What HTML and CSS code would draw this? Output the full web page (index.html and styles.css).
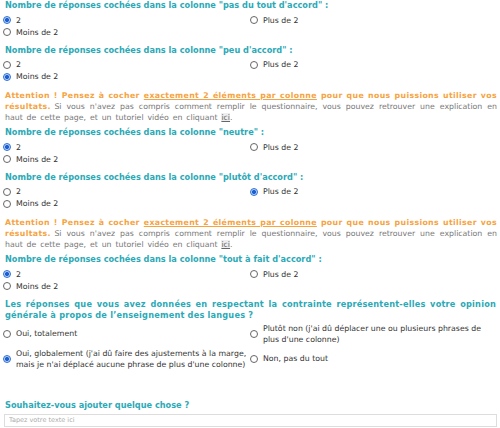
FILE: index.html
```html
<!DOCTYPE html>
<html lang="fr">
<head>
<meta charset="utf-8">
<link rel="stylesheet" href="styles.css">
</head>
<body>
<div class="page">
  <section class="q">
    <h2 class="qt">Nombre de réponses cochées dans la colonne "pas du tout d'accord" :</h2>
    <div class="opts">
      <label class="opt"><input type="radio" name="a" checked><span>2</span></label>
      <label class="opt"><input type="radio" name="a"><span>Plus de 2</span></label>
      <label class="opt"><input type="radio" name="a"><span>Moins de 2</span></label>
    </div>
  </section>
  <section class="q">
    <h2 class="qt">Nombre de réponses cochées dans la colonne "peu d'accord" :</h2>
    <div class="opts">
      <label class="opt"><input type="radio" name="b"><span>2</span></label>
      <label class="opt"><input type="radio" name="b"><span>Plus de 2</span></label>
      <label class="opt"><input type="radio" name="b" checked><span>Moins de 2</span></label>
    </div>
  </section>
  <p class="warn"><strong>Attention ! Pensez à cocher <u>exactement 2 éléments par colonne</u> pour que nous puissions utiliser vos résultats.</strong> <span class="help">Si vous n'avez pas compris comment remplir le questionnaire, vous pouvez retrouver une explication en haut de cette page, et un tutoriel vidéo en cliquant <a class="link">ici</a>.</span></p>
  <section class="q">
    <h2 class="qt">Nombre de réponses cochées dans la colonne "neutre" :</h2>
    <div class="opts">
      <label class="opt"><input type="radio" name="c" checked><span>2</span></label>
      <label class="opt"><input type="radio" name="c"><span>Plus de 2</span></label>
      <label class="opt"><input type="radio" name="c"><span>Moins de 2</span></label>
    </div>
  </section>
  <section class="q">
    <h2 class="qt">Nombre de réponses cochées dans la colonne "plutôt d'accord" :</h2>
    <div class="opts">
      <label class="opt"><input type="radio" name="d"><span>2</span></label>
      <label class="opt"><input type="radio" name="d" checked><span>Plus de 2</span></label>
      <label class="opt"><input type="radio" name="d"><span>Moins de 2</span></label>
    </div>
  </section>
  <p class="warn"><strong>Attention ! Pensez à cocher <u>exactement 2 éléments par colonne</u> pour que nous puissions utiliser vos résultats.</strong> <span class="help">Si vous n'avez pas compris comment remplir le questionnaire, vous pouvez retrouver une explication en haut de cette page, et un tutoriel vidéo en cliquant <a class="link">ici</a>.</span></p>
  <section class="q">
    <h2 class="qt">Nombre de réponses cochées dans la colonne "tout à fait d'accord" :</h2>
    <div class="opts">
      <label class="opt"><input type="radio" name="e" checked><span>2</span></label>
      <label class="opt"><input type="radio" name="e"><span>Plus de 2</span></label>
      <label class="opt"><input type="radio" name="e"><span>Moins de 2</span></label>
    </div>
  </section>
  <section class="q">
    <h2 class="qt just">Les réponses que vous avez données en respectant la contrainte représentent-elles votre opinion générale à propos de l’enseignement des langues ?</h2>
    <div class="opts wide">
      <label class="opt"><input type="radio" name="f"><span>Oui, totalement</span></label>
      <label class="opt"><input type="radio" name="f"><span>Plutôt non (j'ai dû déplacer une ou plusieurs phrases de plus d'une colonne)</span></label>
      <label class="opt"><input type="radio" name="f" checked><span>Oui, globalement (j'ai dû faire des ajustements à la marge, mais je n'ai déplacé aucune phrase de plus d'une colonne)</span></label>
      <label class="opt"><input type="radio" name="f"><span>Non, pas du tout</span></label>
    </div>
  </section>
  <section class="q free">
    <h2 class="qt">Souhaitez-vous ajouter quelque chose ?</h2>
    <input class="txt" type="text" placeholder="Tapez votre texte ici">
  </section>
</div>
</body>
</html>
```
FILE: styles.css
```css
html, body {
  margin: 0;
  padding: 0;
  background: #fff;
}
.page {
  padding: 0 3px;
  font-family: "DejaVu Sans", Verdana, sans-serif;
  font-size: 7.8px;
  line-height: 11px;
  color: #333;
}
.q {
  margin: 0 0 6.5px 0;
}
.qt {
  margin: 0 0 3px 2px;
  font-size: 8.2px;
  line-height: 11px;
  font-weight: bold;
  color: #2ca9b6;
}
.qt.just {
  text-align: justify;
  margin-right: 1px;
  letter-spacing: 0.2px;
}
.opts {
  display: grid;
  grid-template-columns: 1fr 1fr;
}
.opt {
  display: flex;
  align-items: center;
  gap: 5px;
  min-height: 12px;
  color: #333;
}
.opt input {
  appearance: none;
  -webkit-appearance: none;
  margin: 0;
  flex: none;
  width: 8px;
  height: 8px;
  border: 1px solid #666;
  border-radius: 50%;
  background: #fff;
  box-sizing: border-box;
}
.opt input:checked {
  border-color: #2b6fd6;
  background: radial-gradient(circle, #1c5fd0 0 1.8px, #bcd4f6 2.3px);
}
.wide {
  row-gap: 3px;
  margin-top: -1px;
}
.warn {
  margin: 7.5px 0 4px 2px;
  text-align: justify;
  color: #777;
}
.warn strong {
  color: #f6a341;
  letter-spacing: 0.35px;
}
.help {
  word-spacing: 1.4px;
}
.warn u {
  text-decoration: underline;
}
.link {
  color: #666;
  text-decoration: underline;
  background: #eee;
}
.free {
  margin-top: 30px;
}
.txt {
  display: block;
  width: calc(100% - 1px);
  box-sizing: border-box;
  height: 13px;
  margin: 0 0 0 1px;
  padding: 0 4px;
  border: 1px solid #ddd;
  font-family: "DejaVu Sans", Verdana, sans-serif;
  font-size: 6.5px;
  color: #333;
}
.txt::placeholder {
  color: #aaa;
}
```
